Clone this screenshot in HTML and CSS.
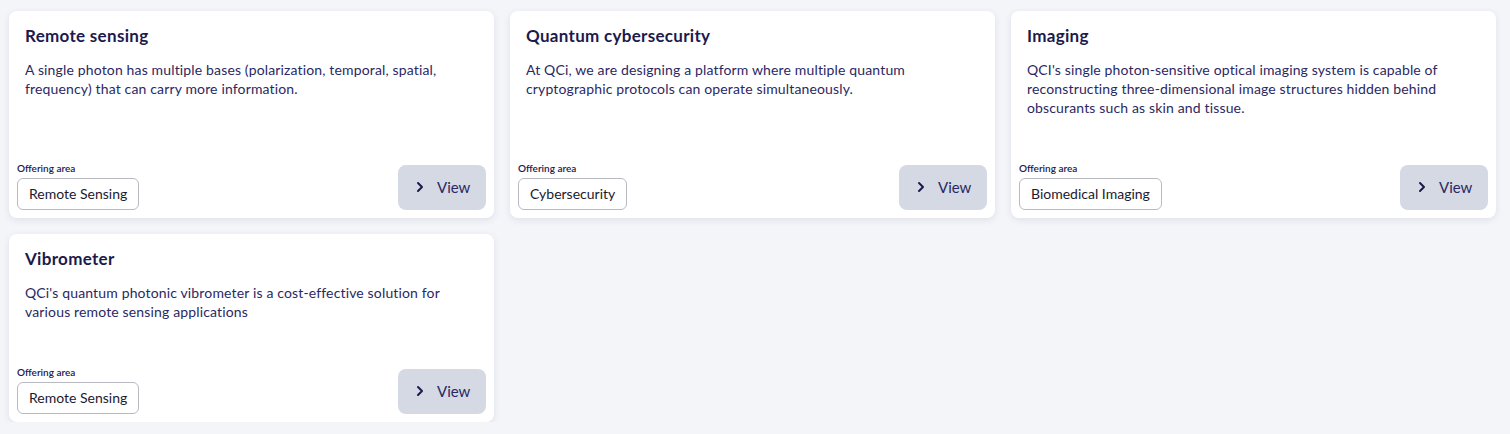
FILE: index.html
```html
<!DOCTYPE html>
<html lang="en">
<head>
<meta charset="utf-8">
<title>Offerings</title>
<link rel="stylesheet" href="styles.css">
</head>
<body>
<div class="grid">
  <div class="card">
    <div class="body">
      <h3 class="title">Remote sensing</h3>
      <p class="desc">A single photon has multiple bases (polarization, temporal, spatial, frequency) that can carry more information.</p>
    </div>
    <div class="foot">
      <div class="area">
        <div class="label">Offering area</div>
        <span class="tag">Remote Sensing</span>
      </div>
      <button class="view"><svg class="chev" viewBox="0 0 8 12" width="8" height="12"><path d="M2 2l4 4-4 4" fill="none" stroke="currentColor" stroke-width="2" stroke-linecap="round" stroke-linejoin="round"/></svg><span>View</span></button>
    </div>
  </div>
  <div class="card">
    <div class="body">
      <h3 class="title">Quantum cybersecurity</h3>
      <p class="desc">At QCi, we are designing a platform where multiple quantum cryptographic protocols can operate simultaneously.</p>
    </div>
    <div class="foot">
      <div class="area">
        <div class="label">Offering area</div>
        <span class="tag">Cybersecurity</span>
      </div>
      <button class="view"><svg class="chev" viewBox="0 0 8 12" width="8" height="12"><path d="M2 2l4 4-4 4" fill="none" stroke="currentColor" stroke-width="2" stroke-linecap="round" stroke-linejoin="round"/></svg><span>View</span></button>
    </div>
  </div>
  <div class="card">
    <div class="body">
      <h3 class="title">Imaging</h3>
      <p class="desc">QCI's single photon-sensitive optical imaging system is capable of reconstructing three-dimensional image structures hidden behind obscurants such as skin and tissue.</p>
    </div>
    <div class="foot">
      <div class="area">
        <div class="label">Offering area</div>
        <span class="tag">Biomedical Imaging</span>
      </div>
      <button class="view"><svg class="chev" viewBox="0 0 8 12" width="8" height="12"><path d="M2 2l4 4-4 4" fill="none" stroke="currentColor" stroke-width="2" stroke-linecap="round" stroke-linejoin="round"/></svg><span>View</span></button>
    </div>
  </div>
  <div class="card">
    <div class="body">
      <h3 class="title">Vibrometer</h3>
      <p class="desc">QCi's quantum photonic vibrometer is a cost-effective solution for various remote sensing applications</p>
    </div>
    <div class="foot">
      <div class="area">
        <div class="label">Offering area</div>
        <span class="tag">Remote Sensing</span>
      </div>
      <button class="view"><svg class="chev" viewBox="0 0 8 12" width="8" height="12"><path d="M2 2l4 4-4 4" fill="none" stroke="currentColor" stroke-width="2" stroke-linecap="round" stroke-linejoin="round"/></svg><span>View</span></button>
    </div>
  </div>
</div>
</body>
</html>
```
FILE: styles.css
```css
html, body {
  margin: 0;
  padding: 0;
  background: #f4f5f9;
}
body {
  font-family: Lato, "Noto Sans", sans-serif;
  color: #1c1a4d;
}
.grid {
  display: grid;
  grid-template-columns: repeat(3, 485px);
  column-gap: 16px;
  row-gap: 16px;
  padding: 11px 0 0 9px;
}
.card {
  background: #fff;
  border-radius: 8px;
  box-shadow: 0 2px 7px rgba(40, 45, 90, 0.1);
  padding: 8px;
  display: flex;
  flex-direction: column;
  justify-content: space-between;
}
.body {
  padding: 7px 8px 0 8px;
}
.title {
  margin: 0;
  font-size: 17px;
  line-height: 19px;
  font-weight: 700;
  letter-spacing: 0.3px;
  color: #1c1a4d;
}
.desc {
  margin: 15px 0 0 0;
  font-size: 14px;
  line-height: 19px;
  letter-spacing: 0.15px;
  color: #2b2863;
  padding-bottom: 45px;
}
.foot {
  display: flex;
  justify-content: space-between;
  align-items: flex-end;
}
.label {
  font-size: 10px;
  font-weight: 600;
  line-height: 12px;
  margin-bottom: 4px;
}
.tag {
  display: inline-flex;
  align-items: center;
  height: 32px;
  box-sizing: border-box;
  padding: 0 11px 1px 11px;
  border: 1px solid #b9b9c2;
  border-radius: 6px;
  font-size: 14px;
  color: #1c1a2e;
}
.view {
  width: 88px;
  height: 45px;
  border: 0;
  border-radius: 8px;
  background: #d4d9e4;
  display: flex;
  align-items: center;
  padding: 0 0 1px 18px;
  gap: 13px;
  font-family: Lato, "Noto Sans", sans-serif;
  font-size: 15px;
  color: #2b2863;
}
.chev {
  color: #1c1a4d;
}
```
